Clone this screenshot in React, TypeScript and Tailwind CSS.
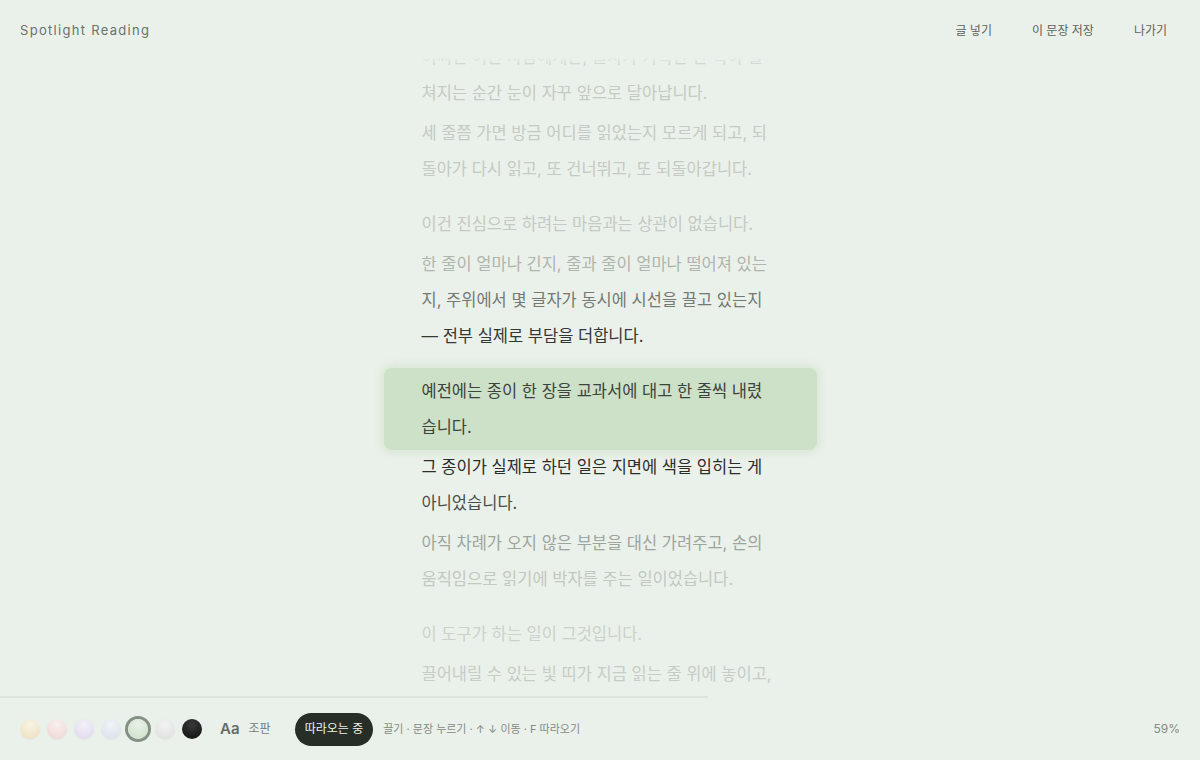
import React from 'react';

type Line = { text: string; color: string };
type Sentence = { lines: Line[]; active?: boolean };

const paragraphs: Sentence[][] = [
  [
    {
      lines: [
        { text: '어쩌면 어떤 사람에게는, 글자가 가득한 한 쪽이 펼', color: '#cbd1cb' },
        { text: '쳐지는 순간 눈이 자꾸 앞으로 달아납니다.', color: '#c4cac4' },
      ],
    },
    {
      lines: [
        { text: '세 줄쯤 가면 방금 어디를 읽었는지 모르게 되고, 되', color: '#c4cac4' },
        { text: '돌아가 다시 읽고, 또 건너뛰고, 또 되돌아갑니다.', color: '#c4cac4' },
      ],
    },
  ],
  [
    { lines: [{ text: '이건 진심으로 하려는 마음과는 상관이 없습니다.', color: '#c3c9c3' }] },
    {
      lines: [
        { text: '한 줄이 얼마나 긴지, 줄과 줄이 얼마나 떨어져 있는', color: '#afb5af' },
        { text: '지, 주위에서 몇 글자가 동시에 시선을 끌고 있는지', color: '#747974' },
        { text: '— 전부 실제로 부담을 더합니다.', color: '#333733' },
      ],
    },
  ],
  [
    {
      active: true,
      lines: [
        { text: '예전에는 종이 한 장을 교과서에 대고 한 줄씩 내렸', color: '#3d433d' },
        { text: '습니다.', color: '#3d433d' },
      ],
    },
    {
      lines: [
        { text: '그 종이가 실제로 하던 일은 지면에 색을 입히는 게', color: '#2a2d2a' },
        { text: '아니었습니다.', color: '#4a4e4a' },
      ],
    },
    {
      lines: [
        { text: '아직 차례가 오지 않은 부분을 대신 가려주고, 손의', color: '#9ea49e' },
        { text: '움직임으로 읽기에 박자를 주는 일이었습니다.', color: '#c2c8c2' },
      ],
    },
  ],
  [
    { lines: [{ text: '이 도구가 하는 일이 그것입니다.', color: '#cbd1cb' }] },
    {
      lines: [{ text: '끌어내릴 수 있는 빛 띠가 지금 읽는 줄 위에 놓이고,', color: '#c6ccc6' }],
    },
  ],
];

const swatches = [
  'bg-[radial-gradient(circle_at_50%_28%,#fcf5e6_0%,#f2e0bd_75%)]',
  'bg-[radial-gradient(circle_at_50%_28%,#fdf0f0_0%,#f3d6d6_75%)]',
  'bg-[radial-gradient(circle_at_50%_28%,#f6f1fb_0%,#e4d9f1_75%)]',
  'bg-[radial-gradient(circle_at_50%_28%,#f2f5fb_0%,#d9e2f1_75%)]',
  'bg-[radial-gradient(circle_at_50%_28%,#e8f2e6_0%,#cde1ca_75%)]',
  'bg-[radial-gradient(circle_at_50%_28%,#f4f4f4_0%,#e0e0e0_75%)]',
  'bg-[radial-gradient(circle_at_50%_28%,#3a3a3a_0%,#1a1a1a_70%)]',
];

function App() {
  return (
    <div
      className="relative flex h-screen flex-col overflow-hidden bg-[#eaf1ea]"
      style={{ fontFamily: 'Inter, "Noto Sans CJK KR", "Noto Sans", sans-serif' }}
    >
      {/* header sits over the scrolled text */}
      <header className="absolute inset-x-0 top-0 z-10">
        <div className="flex h-[57px] items-center justify-between bg-[#eaf1ea] pl-5 pr-[33px] pt-[4px]">
          <span className="text-[13px] tracking-[0.1em] text-[#6b716b]">Spotlight Reading</span>
          <nav className="flex gap-10 text-[12px] text-[#5d625d]">
            <span>글 넣기</span>
            <span>이 문장 저장</span>
            <span>나가기</span>
          </nav>
        </div>
        <div className="h-[8px] bg-gradient-to-b from-[#eaf1ea] to-[#eaf1ea00]" />
      </header>

      <main className="min-h-0 flex-1 overflow-hidden">
        <div className="mx-auto flex w-[433px] flex-col gap-[19px] pt-[39px]">
          {paragraphs.map((p, pi) => (
            <div key={pi} className="flex flex-col gap-[4px]">
              {p.map((s, si) => (
                <div key={si} className="relative px-[38px]">
                  {s.active && (
                    <div className="absolute inset-x-0 -inset-y-[5px] rounded-lg bg-[#cde0c8] shadow-[0_0_8px_3px_rgba(205,224,200,0.6)]" />
                  )}
                  {s.lines.map((l, li) => (
                    <div
                      key={li}
                      className="relative whitespace-nowrap text-[16.5px] leading-[36px]"
                      style={{ color: l.color }}
                    >
                      {l.text}
                    </div>
                  ))}
                </div>
              ))}
            </div>
          ))}
        </div>
      </main>

      <footer className="bg-[#eaf1ea]">
        <div className="h-[2px] w-[59%] bg-[#dde3dd]" />
        <div className="flex h-[62px] items-center px-5">
          <div className="flex items-center gap-[7px]">
            {swatches.map((c, i) => (
              <span
                key={i}
                className={`h-[20px] w-[20px] rounded-full ${c} ${
                  i === 6 ? '' : 'opacity-80 shadow-[0_1px_1px_rgba(0,0,0,0.06)]'
                } ${i === 4 ? 'ring-[3px] ring-[#6e7a6e]' : ''}`}
              />
            ))}
          </div>
          <span className="ml-[18px] text-[15px] font-semibold text-[#666b66]">Aa</span>
          <span className="ml-[9px] text-[12px] text-[#777c77]">조판</span>
          <button className="ml-6 h-[33px] rounded-full bg-[#262e27] px-[10px] text-[12px] text-[#edf1ed]">
            따라오는 중
          </button>
          <span className="ml-[10px] text-[11px] text-[#868b86]">
            끌기 · 문장 누르기 · ↑ ↓ 이동 · F 따라오기
          </span>
          <span className="ml-auto text-[12px] text-[#858a85]">59%</span>
        </div>
      </footer>
    </div>
  );
}

export default App;
